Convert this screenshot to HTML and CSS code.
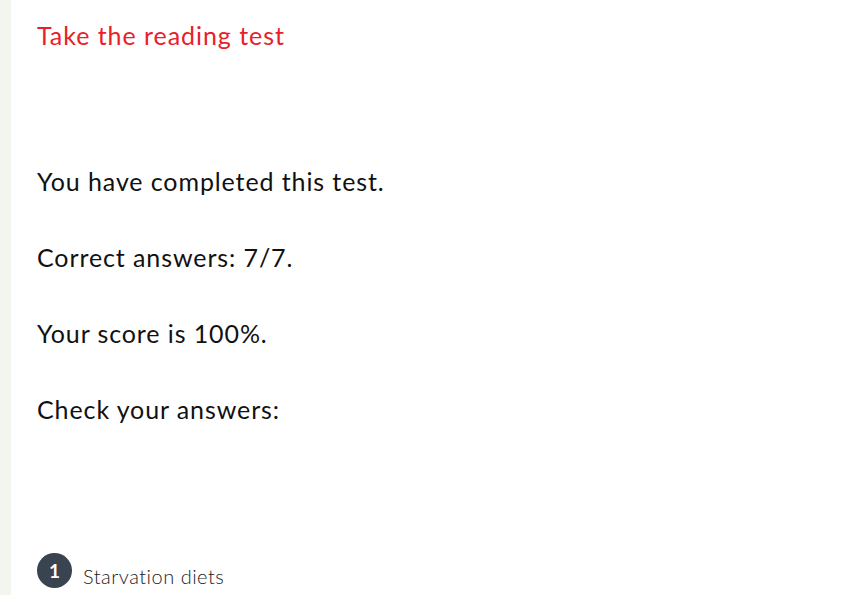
FILE: index.html
```html
<!DOCTYPE html>
<html>
<head>
<meta charset="utf-8">
<link rel="stylesheet" href="styles.css">
</head>
<body>
<div class="page">
  <aside class="strip"></aside>
  <main class="content">
    <h1 class="title">Take the reading test</h1>
    <section class="result">
      <p>You have completed this test.</p>
      <p>Correct answers: 7/7.</p>
      <p>Your score is 100%.</p>
      <p>Check your answers:</p>
    </section>
    <div class="question">
      <span class="badge">1</span>
      <span class="qtitle">Starvation diets</span>
    </div>
  </main>
</div>
</body>
</html>
```

FILE: styles.css
```css
html, body {
  margin: 0;
  padding: 0;
  background: #ffffff;
}
body {
  font-family: Lato, "Open Sans", sans-serif;
}
.page {
  display: flex;
  min-height: 595px;
}
.strip {
  width: 11px;
  background: #f3f6ef;
  flex: none;
}
.content {
  padding: 0 0 0 26px;
  flex: 1;
}
.title {
  margin: 0;
  padding-top: 18px;
  font-size: 25px;
  font-weight: 400;
  letter-spacing: 0.95px;
  color: #e8202a;
  line-height: 34px;
}
.result {
  padding-top: 112px;
}
.result p {
  margin: 0 0 42px 0;
  font-size: 25px;
  letter-spacing: 0.9px;
  line-height: 34px;
  color: #111;
}
.question {
  display: flex;
  align-items: center;
  gap: 11px;
  margin-top: 127px;
}
.badge {
  width: 35px;
  height: 35px;
  border-radius: 50%;
  background: #3a4350;
  color: #fff;
  font-weight: 700;
  font-size: 19px;
  display: flex;
  align-items: center;
  justify-content: center;
  flex: none;
}
.qtitle {
  font-size: 20px;
  font-weight: 300;
  letter-spacing: 0.5px;
  color: #1a1a1a;
  padding-top: 10px;
}
```
